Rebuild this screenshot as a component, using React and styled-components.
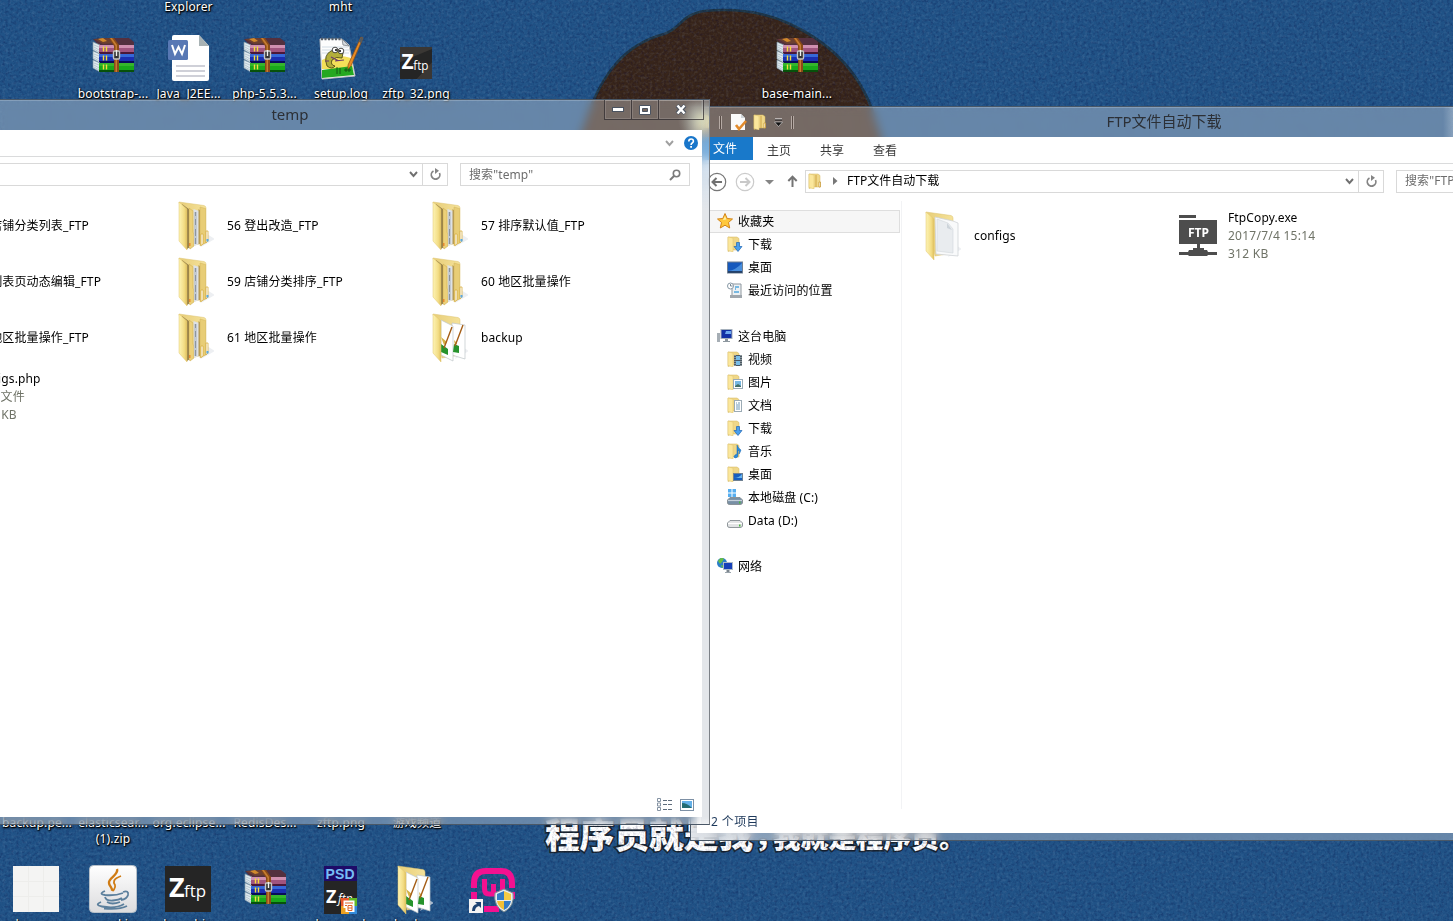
import React from "react";
import styled, { createGlobalStyle, css } from "styled-components";

const Global = createGlobalStyle`
  * { box-sizing: border-box; }
  html, body { margin: 0; height: 921px; overflow: hidden; }
  body {
    font: 12px/18px "Noto Sans", "Noto Sans CJK SC", sans-serif;
    color: #000;
    background: #205184;
  }
  svg { display: block; flex: none; }
`;

const Desktop = styled.main`
  position: relative;
  width: 1453px;
  height: 921px;
  overflow: hidden;
`;

const WallpaperSvg = styled.svg`
  position: absolute;
  inset: 0;
`;

const Shortcut = styled.div`
  position: absolute;
  left: ${(p) => p.$x - 38}px;
  top: ${(p) => p.$y}px;
  width: 76px;
  display: flex;
  flex-direction: column;
  align-items: center;
`;

const ShortcutArt = styled.div`
  height: 52px;
  display: flex;
  align-items: center;
  justify-content: center;
  padding-top: ${(p) => Math.max(p.$shift, 0) * 2}px;
  padding-bottom: ${(p) => Math.max(-p.$shift, 0) * 2}px;
`;

const ShortcutLabel = styled.span`
  color: #fff;
  line-height: 18px;
  white-space: nowrap;
  letter-spacing: 0.15px;
  text-shadow: 1px 1px 1px #000, 0 1px 2px #000, 0 0 3px rgba(0, 0, 0, 0.8);
`;

const Frame = styled.section`
  position: absolute;
  left: ${(p) => p.$x}px;
  top: ${(p) => p.$y}px;
  width: ${(p) => p.$w}px;
  height: ${(p) => p.$h}px;
  display: flex;
  flex-direction: column;
  padding: 0 7px 7px 6px;
  border: 1px solid #4a5867;
  border-right-color: #7c8187;
  box-shadow: inset 0 1px 0 rgba(255, 255, 255, 0.2);
  background: ${(p) => p.$glow} rgba(244, 244, 244, 0.33);
  backdrop-filter: blur(5px);
`;

const glowLeft = css`
  radial-gradient(circle at 828px 20px, rgba(205, 215, 195, 0.6), transparent 22px),
  linear-gradient(rgba(170, 200, 230, 0.1) 30px, rgba(170, 200, 230, 0.5) 60px, #e3e6ea 110px, #e3e6ea 99%, rgba(230, 233, 237, 0.6)) right top / 8px 100% no-repeat,
`;
const glowRight = css`
  linear-gradient(90deg, transparent, rgba(215, 225, 235, 0.3) 10px) 752px 0 / 200px 30px no-repeat,
  linear-gradient(90deg, rgba(225, 230, 236, 0.65), rgba(200, 212, 225, 0.35) 60px, transparent 160px) 0 100% / 200px 12px no-repeat,
`;

const TitleBar = styled.header`
  display: grid;
  grid-template-columns: 1fr auto 1fr;
  align-items: center;
  flex: none;
  height: 30px;
  margin-right: -2px;
`;

const TitleText = styled.h1`
  grid-column: 2;
  margin: 0;
  padding: 0 2px 2px 0;
  font-size: 15px;
  font-weight: 400;
  line-height: 22px;
  color: #2c3036;
`;

const Caption = styled.div`
  display: flex;
  align-self: start;
  justify-self: end;
  border: 1px solid rgba(50, 45, 48, 0.75);
  border-top: 0;
`;

const CaptionButton = styled.div`
  width: ${(p) => p.$w}px;
  height: 19px;
  display: flex;
  align-items: center;
  justify-content: center;
  box-shadow: inset 0 0 0 1px rgba(255, 255, 255, 0.14);
  & + & { border-left: 1px solid rgba(50, 45, 48, 0.75); }
`;

const QuickBar = styled.div`
  display: flex;
  align-items: center;
`;

const QuickSeparator = styled.i`
  width: 3px;
  height: 13px;
  border: 1px solid #b5aaa4;
  border-width: 0 1px;
  background: #574b45;
`;

const Client = styled.div`
  flex: 1;
  min-height: 0;
  display: flex;
  flex-direction: column;
  background: #fff;
`;

const RibbonTabs = styled.nav`
  display: flex;
  flex: none;
  height: 27px;
  border-bottom: 1px solid #dadbdc;
`;

const Tab = styled.span`
  width: ${(p) => (p.$active ? 56 : 53)}px;
  height: ${(p) => (p.$active ? 23 : 26)}px;
  line-height: ${(p) => (p.$active ? 23 : 27)}px;
  padding-right: ${(p) => (p.$active ? 0 : 1)}px;
  text-align: center;
  color: ${(p) => (p.$active ? "#fff" : "#3b3b3b")};
  background: ${(p) => (p.$active ? "#1979ca" : "transparent")};
`;

const RibbonTools = styled.div`
  margin-left: auto;
  display: flex;
  align-items: center;
  gap: 10px;
  padding-right: 4px;
`;

const NavRow = styled.div`
  display: flex;
  align-items: center;
  flex: none;
  height: 36px;
  padding: ${(p) => p.$pad || "0 12px 1px"};
`;

const AddressBox = styled.div`
  display: flex;
  flex: 1;
  height: 23px;
  border: 1px solid #d9d9d9;
  line-height: 20px;
`;

const AddressPath = styled.div`
  flex: 1;
  display: flex;
  align-items: center;
  padding-left: 2px;
  & > span { margin-left: 9px; }
`;

const AddressButton = styled.div`
  width: ${(p) => p.$w}px;
  display: flex;
  align-items: center;
  justify-content: center;
  border-left: ${(p) => (p.$line ? "1px solid #d9d9d9" : "0")};
`;

const SearchBox = styled.div`
  width: 230px;
  height: 23px;
  margin-left: 12px;
  padding: 0 8px;
  display: flex;
  align-items: center;
  justify-content: space-between;
  border: 1px solid #d9d9d9;
  color: #6d6d6d;
  line-height: 20px;
  letter-spacing: 0.1px;
`;

const Columns = styled.div`
  flex: 1;
  min-height: 0;
  display: flex;
`;

const Sidebar = styled.aside`
  width: 205px;
  padding: 9px 1px 0 0;
  border-right: 1px solid #f2f3f5;
  margin-top: 1px;
`;

const NavGroup = styled.div`
  margin-bottom: 23px;
`;

const NavItem = styled.div`
  display: flex;
  align-items: center;
  gap: 5px;
  height: 23px;
  padding-left: ${(p) => (p.$root ? 20 : 30)}px;
  border: 1px solid ${(p) => (p.$selected ? "#dedede" : "transparent")};
  border-left: 0;
  background: ${(p) => (p.$selected ? "#f6f6f6" : "transparent")};
  letter-spacing: 0.1px;
  line-height: 21px;
  white-space: nowrap;
  & > svg { margin-bottom: 1px; }
`;

const Files = styled.div`
  display: grid;
  grid-template-columns: repeat(${(p) => p.$cols}, 254px);
  grid-auto-rows: 56px;
  align-content: start;
  flex: 1;
  padding: ${(p) => p.$pad};
`;

const Tile = styled.div`
  display: flex;
  align-items: center;
  gap: 7px;
  white-space: nowrap;
  margin-top: ${(p) => p.$drop || 0}px;
`;

const TileArt = styled.div`
  width: 48px;
  display: flex;
  justify-content: center;
`;

const TileText = styled.div`
  letter-spacing: 0.12px;
`;

const TileMeta = styled.div`
  color: #6f7367;
  letter-spacing: 0.25px;
`;

const StatusBar = styled.footer`
  flex: none;
  display: flex;
  align-items: center;
  height: 24px;
  padding: ${(p) => (p.$end ? "0 8px 1px 14px" : "1px 8px 0 14px")};
  gap: 8px;
  color: #1e395b;
  letter-spacing: 0.4px;
  justify-content: ${(p) => (p.$end ? "flex-end" : "flex-start")};
`;

function Wallpaper() {
  return (
    <WallpaperSvg width="1453" height="921">
      <defs>
        <filter id="denim" x="0" y="0" width="100%" height="100%">
          <feTurbulence type="fractalNoise" baseFrequency="0.36" numOctaves="2" seed="4" />
          <feColorMatrix values="0 0 0 0 0  0 0 0 0 0  0 0 0 0 0.04  1.5 0 0 0 -0.68" />
        </filter>
        <filter id="denimLight" x="0" y="0" width="100%" height="100%">
          <feTurbulence type="fractalNoise" baseFrequency="0.34" numOctaves="2" seed="11" />
          <feColorMatrix values="0 0 0 0 0.5  0 0 0 0 0.65  0 0 0 0 0.8  1.2 0 0 0 -0.54" />
        </filter>
      </defs>
      <rect width="1453" height="921" fill="#205286" />
      <path d="M586 120C602 72 626 44 664 34C681 29 680 15 704 11C735 8 765 12 790 24C835 45 864 78 876 122L890 165H570Z" fill="#38251a" stroke="#1d3648" strokeWidth="2.5" />
      <g fill="#fff" stroke="#17222e" strokeWidth="3" paintOrder="stroke" fontFamily='"Noto Sans CJK SC", sans-serif' fontWeight="900">
        <text x="545" y="848" fontSize="35" textLength="208">程序员就是我</text>
        <text x="754" y="846" fontSize="30">，</text>
        <text x="773" y="848" fontSize="28" textLength="166">我就是程序员</text>
        <text x="939" y="848" fontSize="26">。</text>
      </g>
      <rect width="1453" height="921" filter="url(#denim)" opacity="0.4" />
      <rect width="1453" height="921" filter="url(#denimLight)" opacity="0.24" />
    </WallpaperSvg>
  );
}

function Book({ y, top, mid, low }) {
  return (
    <g transform={`translate(0 ${y})`}>
      <path d="M1 0L8 3V12L1 8Z" fill="#dfe9ee" stroke="#7f98a8" strokeWidth=".7" />
      <path d="M2 3l5 2M2 5l5 3M2 7l5 3" stroke="#9fb4c0" strokeWidth=".6" />
      <path d="M7 3H42V11H7Z" fill={mid} />
      <path d="M7 3H42V6H7Z" fill={top} />
      <path d="M7 10H42V12H7Z" fill={low} />
      <path d="M11.500 4.500v5M14.500 4.500v5" stroke="#f4dc3c" strokeWidth="1.400" />
    </g>
  );
}

function ArchiveIcon() {
  return (
    <svg width="43" height="36" viewBox="0 0 43 36">
      <path d="M1 2L16 1H37L42 5V10H8Z" fill="#53303f" />
      <path d="M2 2L16 1l8 5-13 1Z" fill="#6d4030" />
      <path d="M6 2l5-1 4 3-4 1Z" fill="#d28a2c" />
      <Book y={5} top="#d08fb0" mid="#a0547e" low="#4b1838" />
      <Book y={14} top="#3668d8" mid="#1a2fb0" low="#080c58" />
      <Book y={23} top="#35b52c" mid="#18a81a" low="#07510b" />
      <path d="M17 1h5l5 7v27h-5V9Z" fill="#8a4a18" />
      <path d="M18 1h2l5 7v27h-1.500V9Z" fill="#c67c30" />
      <rect x="21.500" y="14" width="6" height="8" rx="1" fill="#333" stroke="#c5c5c5" strokeWidth="1.400" />
      <path d="M24.500 13v6" stroke="#f1f1f1" strokeWidth="1.400" />
    </svg>
  );
}

function WordIcon() {
  return (
    <svg width="42" height="46" viewBox="0 0 42 46">
      <path d="M6 0H31L41 11V44Q41 46 39 46H6Q4 46 4 44V2Q4 0 6 0Z" fill="#fff" />
      <path d="M31 0L41 11H31Z" fill="#a8b2b4" />
      <rect x="0" y="5" width="20" height="20" rx="1.500" fill="#5878b4" />
      <path d="M4 10l3 9 3.500-7 3.500 7 3-9" fill="none" stroke="#fff" strokeWidth="2" />
      <path d="M8 31H37M8 36H37M8 41H37" stroke="#cfd0d8" strokeWidth="1.800" />
    </svg>
  );
}

function NotepadIcon() {
  return (
    <svg width="46" height="46" viewBox="0 0 46 46">
      <path d="M2 4H24L31 10L37 41L4 44Z" fill="#fdfdfd" stroke="#c6c6c6" />
      <path d="M3 4H24" stroke="#57616c" strokeWidth="2.500" strokeDasharray="2 1.500" />
      <path d="M24 4l1 6 6 1Z" fill="#d7dbe0" stroke="#6e747a" strokeWidth=".7" />
      <path d="M4 12H30M4 15H31M4 18H31" stroke="#c5d2dc" strokeWidth=".8" />
      <path d="M4 25Q18 18 33 23L35 34H4Z" fill="#f3df59" />
      <path d="M4 35L34 31L36 40L4 43Z" fill="#25a820" />
      <path d="M19 32v7M22 33v6M26 35h7M28 33v4M31 33v4" stroke="#124f12" strokeWidth=".9" />
      <path d="M9 31Q5 20 13 16Q20 12 25 18L24 23Q18 21 14 25Q12 30 17 31Q14 35 9 31Z" fill="#b3ae3a" stroke="#3e3d0f" strokeWidth=".8" />
      <circle cx="17" cy="15" r="2.800" fill="#fff" stroke="#222" strokeWidth=".8" /><circle cx="23" cy="16" r="2.800" fill="#fff" stroke="#222" strokeWidth=".8" />
      <circle cx="18" cy="15" r="1" /><circle cx="22" cy="16" r="1" />
      <path d="M7 26h4M17 26l9-1M13 22l8 4" stroke="#6c3a6e" strokeWidth="1.200" />
      <path d="M43 2L45 3L33 31L30 34L30 30Z" fill="#e88c24" stroke="#8b4a12" strokeWidth=".7" />
      <path d="M43 2l2 1-2 5-2-1Z" fill="#4f5a63" />
    </svg>
  );
}

function ZftpIcon({ size }) {
  const small = size < 40;
  return (
    <svg width={size} height={size} viewBox="0 0 46 46">
      <rect width="46" height="46" fill="#252525" />
      {small && <path d="M0 0H46V3L0 22ZM24 46L46 22V46Z" fill="#3a3734" />}
      <text x={small ? 2 : 4} y={small ? 32 : 31} fill="#fff" fontFamily='"Open Sans", sans-serif' fontWeight="700" fontSize={small ? 30 : 27}>Z</text>
      <text x="19" y={small ? 33 : 31} fill="#fff" fontFamily='"Open Sans", sans-serif' fontSize={small ? 19 : 16} textLength="22" lengthAdjust="spacingAndGlyphs">ftp</text>
    </svg>
  );
}

function BlankIcon() {
  return (
    <svg width="46" height="46">
      <rect width="46" height="46" fill="#f4f4f3" />
      <path d="M15.500 0V46M30.500 0V46M0 15.500H46M0 30.500H46" stroke="#ededeb" />
    </svg>
  );
}

function JavaIcon() {
  return (
    <svg width="48" height="48" viewBox="0 0 48 48">
      <defs><linearGradient id="jar" x2="0" y2="1"><stop stopColor="#fff" /><stop offset="1" stopColor="#dcdcde" /></linearGradient></defs>
      <rect x=".5" y=".5" width="47" height="47" rx="4" fill="url(#jar)" stroke="#b7c0c9" />
      <path d="M28 4C30 10 19 13 20 18C20 21 24 23 23 26" fill="none" stroke="#d07c14" strokeWidth="2.400" />
      <path d="M32 11C24 14 24 17 26 20C27 23 25 24 24 26" fill="none" stroke="#d07c14" strokeWidth="1.800" />
      <g fill="none" stroke="#5b7f9c" strokeWidth="1.800">
        <path d="M16 26Q9 29 16 30Q26 31 34 28" />
        <path d="M16 32Q17 36 24 35.500Q30 35 33 33" />
        <path d="M34 27Q40 25 39 30Q38 34 32 35" />
        <path d="M12 37Q5 40 13 41.500Q27 44 35 39" />
        <path d="M18 37Q23 40 31 37M15 43.500Q30 45 38 41" />
      </g>
    </svg>
  );
}

function PsdIcon() {
  return (
    <svg width="33" height="48" viewBox="0 0 33 48">
      <rect width="33" height="48" fill="#252525" /><rect width="33" height="15" fill="#1e0b68" />
      <text x="1.500" y="13" fontFamily='"Liberation Sans", sans-serif' fontWeight="700" fontSize="14" fill="#76bdf5" textLength="29">PSD</text>
      <text x="2" y="37" fontFamily='"Open Sans", sans-serif' fontWeight="700" fontSize="18" fill="#fff">Z</text>
      <text x="14" y="37" fontFamily='"Open Sans", sans-serif' fontStyle="italic" fontSize="12" fill="#fff">ftp</text>
      <rect x="17" y="32" width="16" height="16" fill="#e8572a" /><path d="M25 32H33V40H25Z" fill="#60ba26" /><path d="M25 40H33V48H25Z" fill="#338bda" /><path d="M17 40H25V48H17Z" fill="#eea020" />
      <path d="M19.500 34.500H30.500V46H21.500V42H19.500Z" fill="#fff" /><path d="M21 37h8M21 39.500h2M24 39.500h4v5h-4ZM24 42h4" fill="none" stroke="#df6424" />
    </svg>
  );
}

function WampIcon() {
  return (
    <svg width="48" height="48" viewBox="0 0 48 48">
      <g fill="none" stroke="#f31190" strokeWidth="6">
        <path d="M5 22V17Q5 5 17 5H32Q43 5 43 17V22" />
        <path d="M5 26V33M43 26V33M15 43H30" />
        <path d="M15.500 13V23Q15.500 28 20 28H29Q33.500 28 33.500 23V13" strokeWidth="5" />
        <path d="M24.500 18V29" strokeWidth="5" />
      </g>
      <rect y="33" width="14" height="14" fill="#f3f3f3" /><path d="M3 45Q3 39 8 38L6 36H12V42L10 40Q6 41 6 45Z" fill="#1c4272" />
      <path d="M35 23L44 27Q46 40 35 46Q24 40 26 27Z" fill="#e7edf0" stroke="#7e8d92" />
      <path d="M35 25V34H28L28 28Z" fill="#347bc5" /><path d="M35 25L42 28V34H35Z" fill="#f6cb43" />
      <path d="M28 35H35V44Q29 41 28 35Z" fill="#f2bf35" /><path d="M35 35H42Q41 41 35 44Z" fill="#347bc5" />
    </svg>
  );
}

function FolderArt({ kind = "full" }) {
  return (
    <svg width="36" height="50" viewBox="0 0 36 50">
      <defs>
        <linearGradient id="flap"><stop stopColor="#fdf3b4" /><stop offset=".65" stopColor="#f3dd85" /><stop offset="1" stopColor="#dfc05f" /></linearGradient>
        <linearGradient id="backing"><stop stopColor="#e7cd78" /><stop offset="1" stopColor="#f5e29a" /></linearGradient>
      </defs>
      <path d="M23 46L37 38L29 33Z" fill="#e5e8ec" opacity=".7" />
      <path d="M1 1L26 4.500Q28 5 28 7V42L10 45Z" fill="url(#backing)" stroke="#dcc36e" strokeWidth=".5" />
      {kind === "full" && (
        <g>
          <path d="M4 3L12 9V46L9 48Z" fill="#8f7a45" />
          <path d="M11 7L15 10V31L16 34V45L12 48L11 46Z" fill="#ecd078" stroke="#c9a84c" strokeWidth=".5" />
          <path d="M15.500 8L21 10V43L16 45Z" fill="#dde1e6" />
          <path d="M17.500 11V43" stroke="#8d959e" strokeWidth="1.600" />
          <path d="M17.500 15v3M17.500 24v4M17.500 35v2" stroke="#c3cad1" strokeWidth="1.600" />
          <path d="M20.500 8L23 10V31L22 43H20.500Z" fill="#b59a54" />
          <path d="M22 6L27.500 7.500V42L22 45Z" fill="#e8cd76" stroke="#cdae52" strokeWidth=".4" />
          <path d="M23 33h2v10l-2 1.500ZM28 30h2v10l-2 2Z" fill="#fff" stroke="#d8ae42" strokeWidth=".8" />
          <rect x="11" y="42" width="1.500" height="3" fill="#e78a32" /><rect x="28.500" y="38" width="2" height="2.500" fill="#58a8e4" />
        </g>
      )}
      {kind === "paper" && (
        <g>
          <path d="M10 6L28 10L33 12V45L11 43Z" fill="#f9fafb" stroke="#cfd3d7" strokeWidth=".8" />
          <path d="M12 8L23 12L28 18V42L12 40Z" fill="#e9ecef" stroke="#d2d7db" strokeWidth=".6" /><path d="M22 12v5l5 2Z" fill="#cdd4da" />
        </g>
      )}
      {kind === "notes" && (
        <g>
          <path d="M20 10L33 12V46L20 42Z" fill="#fff" stroke="#bec5c9" strokeWidth=".7" />
          <path d="M9 7L21 13V48L9 42Z" fill="#fff" stroke="#bec5c9" strokeWidth=".7" />
          <path d="M9 31l7 5v6l-7-3ZM22 31l5 2v7l-6-1Z" fill="#27932c" />
          <path d="M9 24l6 5-3 3ZM22 27l3 3-2 3Z" fill="#d6b245" />
          <path d="M20 14L12 35M31 12L23 33" stroke="#a55e17" strokeWidth="1.400" />
        </g>
      )}
      <path d="M1 1L9 8V49L1 40Z" fill="url(#flap)" stroke="#e2c76e" strokeWidth=".5" />
    </svg>
  );
}

function FtpAppIcon() {
  return (
    <svg width="39" height="42" viewBox="0 0 39 42">
      <path d="M1 0H18V3H1ZM1 5H39V29H1ZM19 29H22V33H26V35H29L30 37H39V40H30L29 41H11L10 40H1V37H10L11 35H15V33H19Z" fill="#4d4d4d" />
      <text x="20.500" y="21.500" textAnchor="middle" fontFamily='"Noto Sans", sans-serif' fontWeight="700" fontSize="12" fill="#fff">FTP</text>
    </svg>
  );
}

function MiniIcon({ kind }) {
  if (kind === "star")
    return <svg width="16" height="16" viewBox="0 0 16 16"><path d="M8 .5l2.200 5 5.300.5-4 3.500 1.200 5.500L8 12.200 3.300 15l1.200-5.500-4-3.500 5.300-.5Z" fill="#ffc83c" stroke="#d38418" /><path d="M8 3l1.300 3.500L6 7Z" fill="#fff0a8" /></svg>;
  if (kind === "screen")
    return <svg width="16" height="16" viewBox="0 0 16 16"><rect x=".5" y="3" width="15" height="11" fill="#1659bd" stroke="#6f7f92" /><path d="M1 12Q9 11 15 4V12Z" fill="#6bb2f2" opacity=".6" /><path d="M1 13h14" stroke="#263a54" strokeWidth="1.500" /></svg>;
  if (kind === "recent")
    return <svg width="16" height="16" viewBox="0 0 16 16"><path d="M3 2h11v12H5V7Z" fill="#edf1f4" stroke="#8e979e" /><circle cx="3.500" cy="4" r="3" fill="#fff" stroke="#8798a5" /><path d="M3.500 2v2h2" stroke="#44596b" fill="none" strokeWidth=".7" /><path d="M8 5h4M8 7h1M7 10h5" stroke="#51a6dc" strokeWidth="1.500" /><path d="M3 13h12v3H3Z" fill="#a0a7ad" /></svg>;
  if (kind === "pc")
    return <svg width="16" height="16" viewBox="0 0 16 16"><rect x="0" y="5" width="3" height="9" fill="#a6aeb5" /><rect x="4" y="1.500" width="11" height="9" fill="#1131a6" stroke="#a5b0bc" /><path d="M9 3h5v3H8Z" fill="#6eaaf0" /><path d="M8 11h3v2h2v1H6v-1h2Z" fill="#8d979f" /></svg>;
  if (kind === "network")
    return <svg width="16" height="16" viewBox="0 0 16 16"><circle cx="5" cy="5" r="5" fill="#2b7ec8" /><path d="M1 3q3-5 6-2l-2 3-2 2ZM4 7l3 1-2 2Z" fill="#67bd45" /><rect x="6.500" y="4.500" width="9" height="7" fill="#1740b8" stroke="#aebac6" /><path d="M9.500 12h3v2h-3Z" fill="#7b858d" /><path d="M8 14.500h6" stroke="#9aa4ac" /></svg>;
  if (kind === "diskC" || kind === "diskD")
    return (
      <svg width="16" height="16" viewBox="0 0 16 16">
        {kind === "diskC" && <path d="M1 0h3.500v3.500H1ZM5.500 0H9v3.500H5.500ZM1 4.500h3.500V8H1ZM5.500 4.500H9V8H5.500Z" fill="#56aef0" />}
        <path d="M3 8.500H13L15.500 11V14Q15 15.500 13 15.500H3Q.5 15.500.5 14V11Z" fill={kind === "diskC" ? "#7890a5" : "#e1e3e4"} stroke="#858c91" strokeWidth=".9" />
        <path d="M1 11.500H15" stroke={kind === "diskC" ? "#c6d2dc" : "#fff"} strokeWidth="1.200" /><rect x="12" y="12.500" width="1.500" height="2" fill="#48b93a" />
      </svg>
    );
  return (
    <svg width="16" height="16" viewBox="0 0 16 16">
      <path d="M1 1H10L12 2.500V14H5L1 15.500Z" fill="#efd789" stroke="#d5b65c" strokeWidth=".5" />
      <path d="M1 1L6 2V16L1 14.500Z" fill="#fbe79c" stroke="#dcc16c" strokeWidth=".5" />
      {kind === "folder" && <path d="M8 2V14M11 9h1.500v5H11Z" stroke="#c99b36" fill="#fff" strokeWidth=".8" />}
      {kind === "download" && <path d="M9.500 6.500h3v4H15L11 15.500 7 10.500H9.500Z" fill="#4a9fed" stroke="#1c65b5" strokeWidth=".7" />}
      {kind === "video" && <g><rect x="7" y="4" width="8" height="11" fill="#4b5963" /><path d="M9 5h4v4H9ZM9 10h4v4H9Z" fill="#78bde8" /><path d="M14 4v11M8 4v11" stroke="#fff" strokeDasharray="1 1" strokeWidth=".7" /></g>}
      {kind === "image" && <g><rect x="6.500" y="5.500" width="9" height="9" fill="#fff" stroke="#9babb5" /><path d="M8 7h6v5H8Z" fill="#77b8e2" /><path d="M8 12l3-2 3 2v1H8Z" fill="#436f65" /></g>}
      {kind === "doc" && <g><rect x="7.500" y="3.500" width="7" height="11" fill="#fff" stroke="#9babb5" /><path d="M9 6h1M11 6h2M9 8h4M9 10h4M9 12h4" stroke="#6c98b9" /></g>}
      {kind === "music" && <path d="M10 2q1 3 4 5-1 3-2 4 1-3-1-4v5q0 3-3 3-2-1 0-3l2-1Z" fill="#288ce0" stroke="#1b65ad" strokeWidth=".5" />}
      {kind === "desk" && <g><rect x="6.500" y="7.500" width="9" height="7" fill="#175fc0" stroke="#6f8192" /><path d="M7 12q5 0 8-4v4Z" fill="#69b5ee" /></g>}
    </svg>
  );
}

const Chevron = ({ light }) => <svg width="9" height="7"><path d="M1 1l3.500 4L8 1" fill="none" stroke={light ? "#a0a0a0" : "#707070"} strokeWidth="1.900" /></svg>;
const Refresh = () => <svg width="13" height="13" viewBox="0 0 13 13"><path d="M4.500 3A4.300 4.300 0 1 0 10.500 5" fill="none" stroke="#848484" strokeWidth="1.700" /><path d="M6 0l4 2.700L6 6Z" fill="#848484" /></svg>;
const Magnifier = () => <svg width="12" height="12" viewBox="0 0 12 12"><circle cx="7.500" cy="4.500" r="3.200" fill="none" stroke="#7a7a7a" strokeWidth="1.600" /><path d="M5 7L1 11" stroke="#7a7a7a" strokeWidth="2" /></svg>;
const Help = () => <svg width="14" height="14" viewBox="0 0 14 14"><circle cx="7" cy="7" r="7" fill="#1976ca" /><path d="M4.800 5.500Q4.800 3 7.100 3T9.400 5.200Q9.400 6.200 8.200 7T7.100 9" fill="none" stroke="#fff" strokeWidth="1.600" /><path d="M6.200 10h1.800v1.800H6.200Z" fill="#fff" /></svg>;

const RoundArrow = ({ back }) => (
  <svg width="20" height="20" viewBox="0 0 20 20">
    <circle cx="10" cy="10" r="8.700" fill="none" stroke={back ? "#777" : "#cbcbcb"} strokeWidth="1.200" />
    <path d={back ? "M15 10H6M9.500 6L5.500 10L9.500 14" : "M5 10H14M10.500 6L14.500 10L10.500 14"} fill="none" stroke={back ? "#717171" : "#c9c9c9"} strokeWidth="2" />
  </svg>
);
const NavArrows = styled.div`
  display: flex;
  align-items: center;
  width: 98px;
  padding-top: 1px;
  & > :nth-child(2) { margin-left: 8px; }
  & > :nth-child(3) { margin-left: 10px; }
  & > :nth-child(4) { margin-left: 13px; }
`;

const shortcuts = [
  [188.5, -54, "Explorer"], [340.5, -54, "mht"],
  [113, 33, "bootstrap-...", <ArchiveIcon />, -4], [188.5, 33, "Java_J2EE...", <WordIcon />, -1],
  [264.5, 33, "php-5.5.3...", <ArchiveIcon />, -4], [341, 33, "setup.log", <NotepadIcon />, -1],
  [416, 33, "zftp_32.png", <ZftpIcon size={32} />, 4], [797, 33, "base-main...", <ArchiveIcon />, -4],
  [37, 762, "backup.pe..."], [113, 762, "elasticsear..."], [189, 762, "org.eclipse..."],
  [265, 762, "RedisDes..."], [341, 762, "zftp.png"], [417, 762, "游戏频道"], [113, 778, "(1).zip"],
  [36, 864, "bg.png", <BlankIcon />, -1], [113, 864, "sword.jar", <JavaIcon />, -1], [188, 864, "logo_big", <ZftpIcon size={46} />, -1],
  [265, 864, "src.rar", <ArchiveIcon />, -3], [340.500, 864, "logo.psd", <PsdIcon />, 0], [415, 864, "backup", <FolderArt kind="notes" />, 0], [493, 864, "wamp", <WampIcon />, 0],
];

const favorites = [["star", "收藏夹"], ["download", "下载"], ["screen", "桌面"], ["recent", "最近访问的位置"]];
const computer = [
  ["pc", "这台电脑"], ["video", "视频"], ["image", "图片"], ["doc", "文档"], ["download", "下载"],
  ["music", "音乐"], ["desk", "桌面"], ["diskC", "本地磁盘 (C:)"], ["diskD", "Data (D:)"],
];
const folders = [
  "55 店铺分类列表_FTP", "56 登出改造_FTP", "57 排序默认值_FTP",
  "58 列表页动态编辑_FTP", "59 店铺分类排序_FTP", "60 地区批量操作",
  "60 地区批量操作_FTP", "61 地区批量操作", "backup",
];

function NavSection({ items, selected }) {
  return (
    <NavGroup>
      {items.map(([kind, name], i) => (
        <NavItem key={name} $root={i === 0} $selected={selected && i === 0}>
          <MiniIcon kind={kind} /><span>{name}</span>
        </NavItem>
      ))}
    </NavGroup>
  );
}

function FtpWindow() {
  return (
    <Frame $x={690} $y={106} $w={949} $h={735} $glow={glowRight}>
      <TitleBar>
        <QuickBar>
          <MiniIcon kind="folder" />
          <svg width="6" height="1" />
          <QuickSeparator />
          <svg width="28" height="18" viewBox="0 0 28 18"><path d="M9 1H19L23 5V17H9Z" fill="#fafafa" /><path d="M19 1v4h4Z" fill="#cfd5d8" /><path d="M14 12l3 4 7-8" fill="none" stroke="#e28b2c" strokeWidth="2.600" /></svg>
          <svg width="3" height="1" />
          <MiniIcon kind="folder" />
          <svg width="22" height="9" viewBox="0 0 22 9"><path d="M6 1h7" stroke="#fff" /><path d="M6 2h7" stroke="#111" /><path d="M5.500 4h8l-4 4.500Z" fill="#111" stroke="#ddd" strokeWidth=".6" /></svg>
          <QuickSeparator />
        </QuickBar>
        <TitleText>FTP文件自动下载</TitleText>
      </TitleBar>
      <Client>
        <RibbonTabs><Tab $active>文件</Tab><Tab>主页</Tab><Tab>共享</Tab><Tab>查看</Tab></RibbonTabs>
        <NavRow $pad="0 5px 2px 10px">
          <NavArrows>
            <RoundArrow back /><RoundArrow />
            <svg width="9" height="6"><path d="M0 1h9L4.500 5.500Z" fill="#858585" /></svg>
            <svg width="11" height="13"><path d="M5.500 12V2M1.300 6L5.500 1.700L9.700 6" fill="none" stroke="#747474" strokeWidth="2" /></svg>
          </NavArrows>
          <AddressBox>
            <AddressPath>
              <MiniIcon kind="folder" />
              <svg width="14" height="8"><path d="M9 0v8l4.500-4Z" fill="#777" /></svg>
              <span>FTP文件自动下载</span>
            </AddressPath>
            <AddressButton $w={17}><Chevron /></AddressButton>
            <AddressButton $w={25} $line><Refresh /></AddressButton>
          </AddressBox>
          <SearchBox>搜索"FTP文件自动下载"<Magnifier /></SearchBox>
        </NavRow>
        <Columns>
          <Sidebar>
            <NavSection items={favorites} selected />
            <NavSection items={computer} />
            <NavSection items={[["network", "网络"]]} />
          </Sidebar>
          <Files $cols={2} $pad="8px 0 0 17px">
            <Tile><TileArt><FolderArt kind="paper" /></TileArt><TileText>configs</TileText></Tile>
            <Tile>
              <TileArt><FtpAppIcon /></TileArt>
              <TileText>FtpCopy.exe<TileMeta>2017/7/4 15:14</TileMeta><TileMeta>312 KB</TileMeta></TileText>
            </Tile>
          </Files>
        </Columns>
        <StatusBar>2 个项目</StatusBar>
      </Client>
    </Frame>
  );
}

function TempWindow() {
  return (
    <Frame $x={-129} $y={99} $w={839} $h={726} $glow={glowLeft}>
      <TitleBar>
        <TitleText>temp</TitleText>
        <Caption>
          <CaptionButton $w={26}><svg width="12" height="5"><rect x=".5" y=".5" width="11" height="4" fill="#fff" stroke="#4b5360" /></svg></CaptionButton>
          <CaptionButton $w={27}><svg width="12" height="10"><path d="M.5.5h11v9H.5Z" fill="#fff" stroke="#4b5360" /><path d="M3.500 3.500h5v3h-5Z" fill="#75655c" stroke="#4b5360" /></svg></CaptionButton>
          <CaptionButton $w={45}><svg width="12" height="11"><path d="M2 1.500l8 8M10 1.500l-8 8" stroke="#4b5360" strokeWidth="4" /><path d="M2.500 1.500l7 8M9.500 1.500l-7 8" stroke="#fff" strokeWidth="2.500" /></svg></CaptionButton>
        </Caption>
      </TitleBar>
      <Client>
        <RibbonTabs><RibbonTools><Chevron light /><Help /></RibbonTools></RibbonTabs>
        <NavRow>
          <AddressBox>
            <AddressPath />
            <AddressButton $w={17}><Chevron /></AddressButton>
            <AddressButton $w={25} $line><Refresh /></AddressButton>
          </AddressBox>
          <SearchBox>搜索"temp"<Magnifier /></SearchBox>
        </NavRow>
        <Files $cols={3} $pad="5px 0 0 40px">
          {folders.map((name) => (
            <Tile key={name}>
              <TileArt><FolderArt kind={name === "backup" ? "notes" : "full"} /></TileArt>
              <TileText>{name}</TileText>
            </Tile>
          ))}
          <Tile $drop={6}>
            <TileArt />
            <TileText>configs.php<TileMeta>PHP 文件</TileMeta><TileMeta>1.42 KB</TileMeta></TileText>
          </Tile>
        </Files>
        <StatusBar $end>
          <svg width="15" height="13"><path d="M.5.5h3v3h-3ZM.5 5h3v3h-3ZM.5 9.500h3v3h-3Z" fill="#fff" stroke="#8593a3" /><path d="M6 2.500h4M11 2.500h4M6 6.500h4M11 6.500h4M6 11.500h4M11 11.500h4" stroke="#5e6c7c" /></svg>
          <svg width="14" height="12"><rect x=".5" y=".5" width="13" height="11" fill="#fff" stroke="#7d90a5" /><path d="M2 2h10v7H2Z" fill="#64b0e8" /><path d="M2 4q5 0 10 5H2Z" fill="#236b72" /></svg>
        </StatusBar>
      </Client>
    </Frame>
  );
}

export default function App() {
  return (
    <>
      <Global />
      <Desktop>
        <Wallpaper />
        {shortcuts.map(([x, y, label, art, shift = 0]) => (
          <Shortcut key={`${x}-${y}`} $x={x} $y={y}>
            <ShortcutArt $shift={shift}>{art}</ShortcutArt>
            <ShortcutLabel>{label}</ShortcutLabel>
          </Shortcut>
        ))}
        <FtpWindow />
        <TempWindow />
      </Desktop>
    </>
  );
}
